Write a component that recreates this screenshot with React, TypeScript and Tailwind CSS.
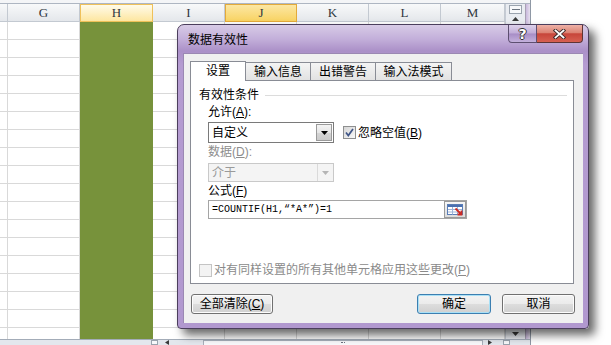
import React from "react"

const rows = Array.from({ length: 18 }, (_, i) => i)

const cols = [
  { key: "F", w: "w-[8px]" },
  { key: "G", w: "w-[72px]" },
  { key: "H", w: "w-[73px]" },
  { key: "I", w: "w-[72px]" },
  { key: "J", w: "w-[72px]" },
  { key: "K", w: "w-[72px]" },
  { key: "L", w: "w-[72px]" },
  { key: "M", w: "w-[64px]" },
]

function HeaderCell({ w, label }: { w: string; label: string }) {
  let tone = "bg-[linear-gradient(#f8f9fa,#e4e7eb)] border-r border-b border-[#c3c9d1]"
  if (label === "H") tone = "bg-[linear-gradient(#fffbea,#fde6a0)] border border-[#efc15a]"
  if (label === "J") tone = "bg-[linear-gradient(#fce7a4,#f8d363)] border border-[#e3aa3a]"
  return (
    <div className={`${w} h-full flex items-center justify-center ${tone}`}>
      <span className="font-['Liberation_Serif',serif] text-[13px] text-[#2f3640]">{label === "F" ? "" : label}</span>
    </div>
  )
}

function Check({ checked, disabled }: { checked?: boolean; disabled?: boolean }) {
  return (
    <span
      className={`w-[13px] h-[13px] shrink-0 border flex items-center justify-center ${
        disabled
          ? "border-[#c4c4c4] bg-[#f3f3f3]"
          : "border-[#8e8f8f] bg-[linear-gradient(135deg,#d6d6d6,#f8f8f8)]"
      }`}
    >
      {checked && (
        <svg width="9" height="9" viewBox="0 0 9 9">
          <path d="M1 4.5 L3.3 7.5 L8 1" stroke="#3f5587" strokeWidth="1.7" fill="none" />
        </svg>
      )}
    </span>
  )
}

function Combo({ value, disabled, h }: { value: string; disabled?: boolean; h: string }) {
  return (
    <div
      className={`w-[126px] ${h} border flex items-stretch ${
        disabled ? "border-[#c9c9c9] bg-[#f4f4f4]" : "border-[#7a7a7a] bg-white"
      }`}
    >
      <span className={`flex-1 flex items-center pl-[3px] ${disabled ? "text-[#9a9a9a]" : "text-black"}`}>{value}</span>
      {disabled ? (
        <span className="w-[16px] border-l border-[#dadada] flex items-center justify-center">
          <svg width="7" height="4" viewBox="0 0 7 4">
            <path d="M0 0H7L3.5 4Z" fill="#b5b5b5" />
          </svg>
        </span>
      ) : (
        <span className="w-[16px] m-[1px] border border-[#9a9a9a] bg-[linear-gradient(#f4f4f4,#e6e6e6_50%,#d6d6d6_50%,#cacaca)] flex items-center justify-center">
          <svg width="7" height="4" viewBox="0 0 7 4">
            <path d="M0 0H7L3.5 4Z" fill="#000" />
          </svg>
        </span>
      )}
    </div>
  )
}

function Btn({ label, w, def }: { label: React.ReactNode; w: string; def?: boolean }) {
  return (
    <button
      className={`${w} h-[20px] rounded-[3px] border flex items-center justify-center text-[12px] leading-[16px] text-black bg-[linear-gradient(#f3f3f3_0%,#ebebeb_50%,#dddddd_50%,#d0d0d0_100%)] ${
        def ? "border-[#3c7fb1] shadow-[inset_0_0_0_1px_#a9e0f6]" : "border-[#707070] shadow-[inset_0_0_0_1px_#fcfcfc]"
      }`}
    >
      {label}
    </button>
  )
}

export default function App() {
  return (
    <div className="relative w-[611px] h-[345px] overflow-hidden bg-white flex font-['Liberation_Sans','Noto_Sans_CJK_SC',sans-serif] text-[12px] leading-[16px]">
      {/* Excel 窗口 */}
      <div className="w-[531px] h-full flex flex-col border-r border-[#8f98a5]">
        <div className="h-[4px] bg-[#f4f5f7] border-b border-[#aeb6c2]" />
        <div className="flex-1 flex min-h-0">
          <div className="w-[505px] flex flex-col">
            <div className="h-[18px] flex">
              {cols.map((c) => (
                <HeaderCell key={c.key} w={c.w} label={c.key} />
              ))}
            </div>
            <div className="flex-1 overflow-hidden">
              {rows.map((r) => (
                <div key={r} className="h-[18px] flex">
                  {cols.map((c) =>
                    c.key === "H" ? (
                      <div key={c.key} className={`${c.w} h-full bg-[#77923b]`} />
                    ) : (
                      <div key={c.key} className={`${c.w} h-full border-r border-b border-[#d9d9d9]`} />
                    )
                  )}
                </div>
              ))}
            </div>
          </div>
          {/* 垂直滚动条 */}
          <div className="w-[20px] flex flex-col bg-[#e9ecf1] border-l border-[#c5cbd4]">
            <div className="h-[9px] mx-[3px] mt-[1px] border border-[#9aa3ae] bg-[#f7f8fa] flex items-center justify-center">
              <div className="w-[8px] h-[1px] bg-[#6b7480]" />
            </div>
            <div className="h-[9px] flex items-center justify-center">
              <svg width="7" height="4" viewBox="0 0 7 4">
                <path d="M0 4H7L3.5 0Z" fill="#3a3a3a" />
              </svg>
            </div>
            <div className="flex-1" />
            <div className="h-[10px] flex items-center justify-center">
              <svg width="7" height="4" viewBox="0 0 7 4">
                <path d="M0 0H7L3.5 4Z" fill="#3a3a3a" />
              </svg>
            </div>
          </div>
          <div className="w-[5px] bg-[linear-gradient(90deg,#c9b8dd,#e6e0ee)] border-l border-[#a8a0b4]" />
        </div>
        {/* 底部水平滚动条 */}
        <div className="h-[6px] bg-[#e3e7ed] border-t border-[#a3acb8] flex items-start">
          <div className="ml-[151px] w-[7px] h-[5px] border border-[#9aa3ae] bg-[#f7f8fa]" />
          <div className="ml-[7px] w-[5px] h-[5px] flex items-center">
            <svg width="4" height="5" viewBox="0 0 4 5">
              <path d="M4 0V5L0 2.5Z" fill="#3a3a3a" />
            </svg>
          </div>
          <div className="ml-[33px] w-[280px] h-[5px] border border-b-0 border-[#a7afba] bg-[#f8f9fb] flex justify-center">
            <span className="w-[4px] h-[2px] mt-[1px] border-t border-dotted border-[#6b7480]" />
          </div>
          <div className="ml-[5px] w-[5px] h-[5px] flex items-center">
            <svg width="4" height="5" viewBox="0 0 4 5">
              <path d="M0 0V5L4 2.5Z" fill="#3a3a3a" />
            </svg>
          </div>
          <div className="ml-[10px] w-[7px] h-[5px] border border-[#9aa3ae] bg-[#f7f8fa]" />
        </div>
      </div>
      <div className="flex-1" />

      {/* 数据有效性 对话框 */}
      <div className="absolute left-[177px] top-[24px] w-[412px] h-[305px] flex flex-col rounded-t-[7px] rounded-b-[4px] border border-[#4b3e5c] bg-[linear-gradient(180deg,#d8cbe6_0px,#c3afda_14px,#ab90c8_26px,#b59cd1_40px,#b198cf_100%)] shadow-[6px_6px_10px_rgba(0,0,0,0.6)] px-[5px] pb-[5px]">
        {/* 标题栏 */}
        <div className="relative h-[28px] shrink-0">
          <span className="absolute left-[5px] top-[7px] text-black">数据有效性</span>
          <div className="absolute right-0 top-0 flex">
            <div className="w-[29px] h-[18px] border border-t-0 border-[#5d4f70] rounded-bl-[4px] bg-[linear-gradient(#ddd1ea,#c0acd8_48%,#a78dc6_52%,#c4b1dc)] flex items-center justify-center">
              <span className="font-['DejaVu_Sans',sans-serif] text-white font-bold text-[14px] leading-[14px] [text-shadow:1px_0_0_#333,-1px_0_0_#333,0_1px_0_#333,0_-1px_0_#333]">?</span>
            </div>
            <div className="w-[46px] h-[18px] border border-l-0 border-t-0 border-[#5e3535] rounded-br-[4px] bg-[linear-gradient(#eeb1a7,#dc8373_45%,#c7453a_52%,#d76152)] flex items-center justify-center">
              <svg width="13" height="10" viewBox="0 0 13 10">
                <path d="M2.5 1.5L10.5 8.5M10.5 1.5L2.5 8.5" stroke="#3a2a2a" strokeWidth="3.6" strokeLinecap="square" />
                <path d="M2.5 1.5L10.5 8.5M10.5 1.5L2.5 8.5" stroke="#ffffff" strokeWidth="1.8" strokeLinecap="square" />
              </svg>
            </div>
          </div>
        </div>

        {/* 客户区 */}
        <div className="flex-1 bg-[#f0f0f0] border-l border-t border-[#9b88b3] flex flex-col">
          {/* 选项卡 */}
          <div className="mt-[7px] ml-[6px] h-[19px] flex items-end">
            <div className="relative z-10 -mb-[1px] w-[56px] h-[20px] bg-white border border-b-0 border-[#898c95] flex items-center justify-center pb-[1px]">
              设置
            </div>
            <div className="w-[65px] h-[18px] bg-[linear-gradient(#f4f4f4,#e2e2e2)] border border-b-0 border-l-0 border-[#898c95] flex items-center justify-center">
              输入信息
            </div>
            <div className="w-[65px] h-[18px] bg-[linear-gradient(#f4f4f4,#e2e2e2)] border border-b-0 border-l-0 border-[#898c95] flex items-center justify-center">
              出错警告
            </div>
            <div className="w-[76px] h-[18px] bg-[linear-gradient(#f4f4f4,#e2e2e2)] border border-b-0 border-l-0 border-[#898c95] flex items-center justify-center">
              输入法模式
            </div>
          </div>

          {/* 选项卡页面 */}
          <div className="ml-[6px] w-[384px] h-[204px] bg-white border border-[#898c95] flex flex-col">
            <div className="mt-[6px] pl-[8px] pr-[6px] flex items-center gap-[6px]">
              <span>有效性条件</span>
              <div className="flex-1 h-0 border-t border-[#dcdcdc]" />
            </div>
            <div className="mt-[1px] ml-[17px]">
              允许(<u>A</u>):
            </div>
            <div className="mt-[2px] ml-[17px] flex items-center">
              <Combo value="自定义" h="h-[21px]" />
              <span className="ml-[9px]">
                <Check checked />
              </span>
              <span className="ml-[2px]">
                忽略空值(<u>B</u>)
              </span>
            </div>
            <div className="mt-[1px] ml-[17px] text-[#8d8d8d]">
              数据(<u>D</u>):
            </div>
            <div className="mt-[3px] ml-[17px]">
              <Combo value="介于" disabled h="h-[19px]" />
            </div>
            <div className="mt-[1px] ml-[17px]">
              公式(<u>F</u>)
            </div>
            <div className="mt-[1px] ml-[17px] w-[259px] h-[19px] border border-[#a5a5a5] bg-white flex items-center">
              <span className="flex-1 pl-[3px] font-['Liberation_Mono',monospace] text-[10px] leading-[12px] text-black">
                =COUNTIF(H1,“*A*”)=1
              </span>
              <span className="w-[22px] h-[17px] border border-[#9a9a9a] bg-[linear-gradient(#f7f7f7,#dcdcdc)] flex items-center justify-center">
                <svg width="17" height="12" viewBox="0 0 17 12">
                  <rect x="0.5" y="0.5" width="15" height="10" fill="#ffffff" stroke="#5a7db6" />
                  <rect x="1" y="1" width="14" height="2" fill="#4a70b0" />
                  <path d="M1 5.5H15M1 8H15M5.5 3V10.5M10.5 3V10.5" stroke="#9fb5d9" />
                  <path d="M8.5 4.5L14 10M10.5 10.5H14.5V6.5" stroke="#cc2a24" strokeWidth="1.8" fill="none" />
                </svg>
              </span>
            </div>
            <div className="mt-[43px] ml-[8px] flex items-center gap-[2px] text-[#8a8a8a]">
              <Check disabled />
              <span>
                对有同样设置的所有其他单元格应用这些更改(<u>P</u>)
              </span>
            </div>
          </div>

          {/* 按钮 */}
          <div className="mt-[10px] ml-[7px] mr-[8px] flex items-center">
            <Btn w="w-[82px]" label={<span>全部清除(<u>C</u>)</span>} />
            <div className="flex-1" />
            <Btn w="w-[74px]" def label="确定" />
            <div className="w-[11px]" />
            <Btn w="w-[73px]" label="取消" />
          </div>
        </div>
      </div>
    </div>
  )
}
